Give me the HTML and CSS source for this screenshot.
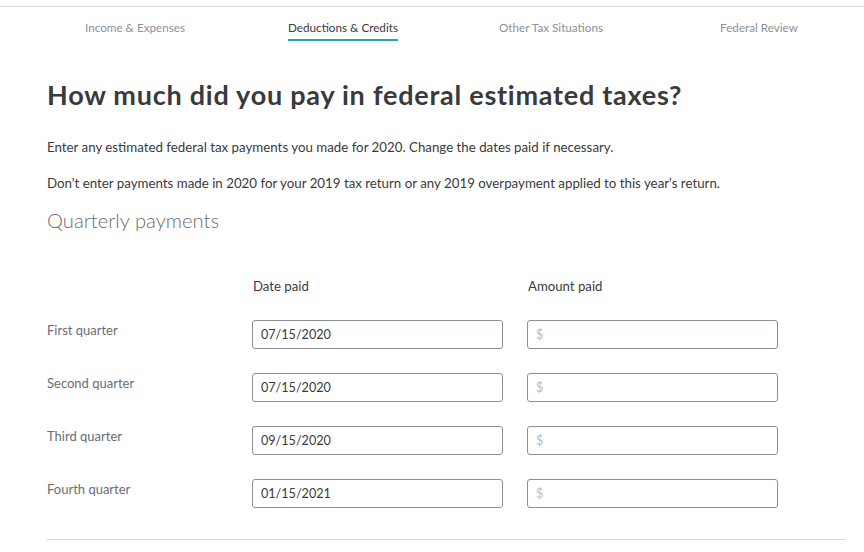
FILE: index.html
```html
<!DOCTYPE html>
<html lang="en">
<head>
<meta charset="utf-8">
<title>Federal estimated taxes</title>
<link rel="stylesheet" href="styles.css">
</head>
<body>
<header class="topbar">
  <nav class="steps">
    <div class="step"><span class="step-label">Income &amp; Expenses</span></div>
    <div class="step"><span class="step-label active">Deductions &amp; Credits</span></div>
    <div class="step"><span class="step-label">Other Tax Situations</span></div>
    <div class="step"><span class="step-label">Federal Review</span></div>
  </nav>
</header>
<main class="page">
  <h1 class="title">How much did you pay in federal estimated taxes?</h1>
  <p class="text">Enter any estimated federal tax payments you made for 2020. Change the dates paid if necessary.</p>
  <p class="text">Don't enter payments made in 2020 for your 2019 tax return or any 2019 overpayment applied to this year's return.</p>
  <h2 class="subtitle">Quarterly payments</h2>
  <div class="form">
    <div class="col-head"></div>
    <div class="col-head">Date paid</div>
    <div class="col-head">Amount paid</div>

    <div class="row-label">First quarter</div>
    <div class="field">07/15/2020</div>
    <div class="field placeholder">$</div>

    <div class="row-label">Second quarter</div>
    <div class="field">07/15/2020</div>
    <div class="field placeholder">$</div>

    <div class="row-label">Third quarter</div>
    <div class="field">09/15/2020</div>
    <div class="field placeholder">$</div>

    <div class="row-label">Fourth quarter</div>
    <div class="field">01/15/2021</div>
    <div class="field placeholder">$</div>
  </div>
  <hr class="divider">
</main>
</body>
</html>
```
FILE: styles.css
```css
* { box-sizing: border-box; }
html, body { margin: 0; padding: 0; background: #fff; }
body {
  font-family: "Lato", "Noto Sans", sans-serif;
  color: #393a3d;
  width: 864px;
  height: 552px;
  overflow: hidden;
}
.topbar {
  margin-top: 6px;
  border-top: 1px solid #d9d9de;
}
.steps {
  display: flex;
  padding-left: 31px;
  padding-top: 13px;
}
.step {
  width: 208px;
  display: flex;
  justify-content: center;
}
.step-label {
  font-size: 11.7px;
  color: #8d9096;
  line-height: 14px;
  padding-bottom: 5px;
  border-bottom: 2px solid transparent;
}
.step-label.active {
  color: #393a3d;
  border-bottom-color: #21a6b4;
}
.page {
  padding: 0 18px 0 47px;
}
.title {
  margin: 38px 0 0;
  font-size: 27px;
  letter-spacing: 0.75px;
  font-weight: 700;
  line-height: 32px;
  color: #393a3d;
}
.text {
  margin: 28px 0 0;
  font-size: 13.3px;
  line-height: 16px;
  color: #393a3d;
}
.text + .text { margin-top: 20px; }
.subtitle {
  margin: 16px 0 0;
  font-size: 20.2px;
  font-weight: 300;
  line-height: 26px;
  color: #6b6c72;
}
.form {
  display: grid;
  grid-template-columns: 181px 251px 251px;
  column-gap: 24px;
  row-gap: 24px;
  margin-top: 45px;
  font-size: 13px;
}
.col-head {
  padding-left: 1px;
  line-height: 16px;
  font-size: 13.2px;
  margin-bottom: 2px;
  color: #393a3d;
}
.row-label {
  color: #6b6c72;
  line-height: 16px;
  padding-top: 2px;
}
.field {
  height: 29px;
  border: 1px solid #8d9096;
  border-radius: 3px;
  padding: 0 8px;
  display: flex;
  align-items: center;
  font-size: 12.6px;
  color: #393a3d;
}
.field.placeholder { color: #b6bac5; }
.divider {
  border: 0;
  border-top: 1px solid #bde3ec;
  margin: 31px 0 0;
  width: 799px;
}
```
